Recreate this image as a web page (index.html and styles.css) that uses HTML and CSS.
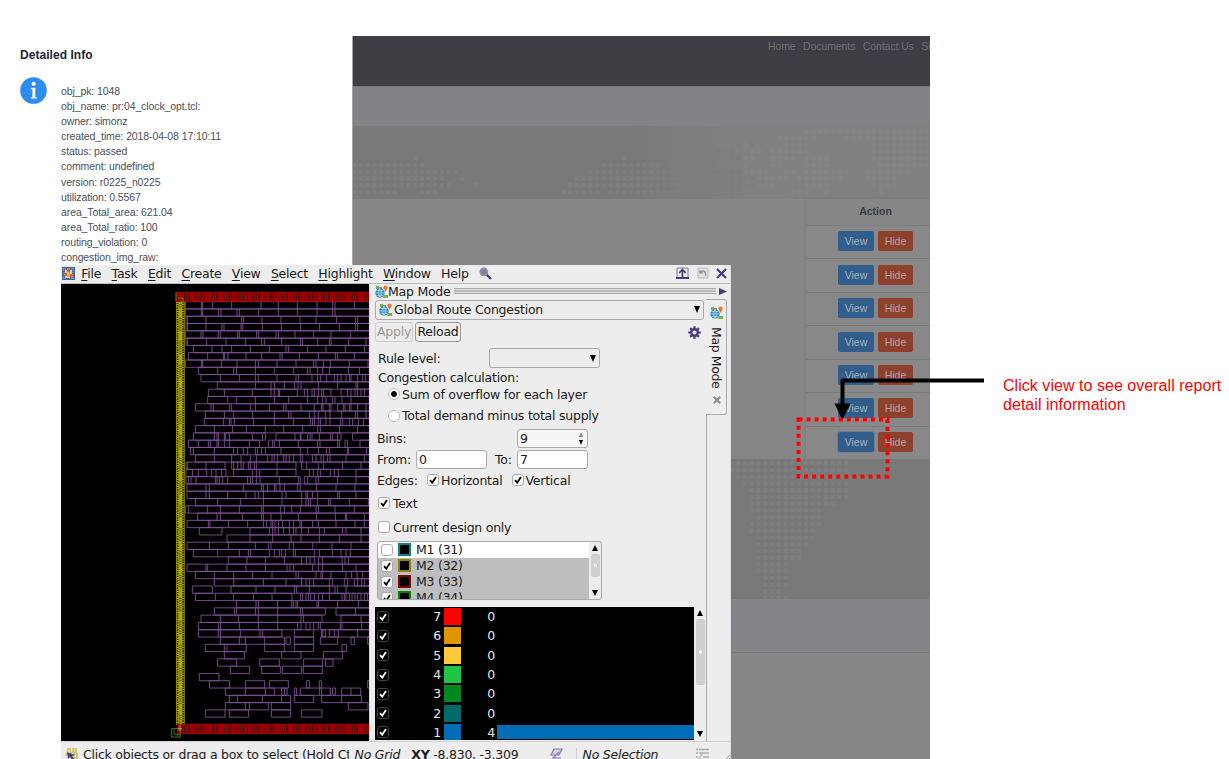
FILE: index.html
```html
<!DOCTYPE html>
<html lang="en">
<head>
<meta charset="utf-8">
<title>Detailed Info</title>
<link rel="stylesheet" href="styles.css">
</head>
<body>
<svg class="defs" width="0" height="0">
  <symbol id="map" viewBox="0 0 13 13">
    <path d="M1 1h3v3H1zM4 2h3v2H4zM9 10h4v3H8z" fill="#79b04c"/>
    <circle cx="5" cy="8" r="4.7" fill="#2c86b8"/>
    <path d="M.5 8h9M1.500 5.500h7M1.500 10.500h7M5 3.400v9.200M5 3.400q-4 4.600 0 9.200M5 3.400q4 4.600 0 9.200" fill="none" stroke="#c8e4ee" stroke-width=".6"/>
    <path d="M10.500 7 8.600 3.500a2.100 2.100 0 1 1 3.800 0z" fill="#ee7535"/>
  </symbol>
  <symbol id="check" viewBox="0 0 8 8"><path d="M1 4.200 3.200 6.700 7 1" fill="none" stroke="currentColor" stroke-width="1.800"/></symbol>
</svg>
<main class="stage">
  <section class="site">
    <nav class="topnav"><span>Home</span><span>Documents</span><span>Contact Us</span><span>Si</span></nav>
    <div class="strip"></div>
    <div class="band band-top"><svg class="dots" id="dots-top" width="578" height="73"></svg></div>
    <div class="content">
      <div class="card">
        <div class="card-head">Action</div>
        <div class="card-row"><b class="btn view">View</b><b class="btn hide">Hide</b></div>
        <div class="card-row"><b class="btn view">View</b><b class="btn hide">Hide</b></div>
        <div class="card-row"><b class="btn view">View</b><b class="btn hide">Hide</b></div>
        <div class="card-row"><b class="btn view">View</b><b class="btn hide">Hide</b></div>
        <div class="card-row"><b class="btn view">View</b><b class="btn hide">Hide</b></div>
        <div class="card-row"><b class="btn view">View</b><b class="btn hide">Hide</b></div>
        <div class="card-row"><b class="btn view focus">View</b><b class="btn hide">Hide</b></div>
      </div>
    </div>
    <div class="band band-bottom"><svg class="dots" id="dots-bottom" width="578" height="140"></svg></div>
    <div class="prefoot"></div>
    <div class="foot"></div>
  </section>

  <section class="info">
    <h1>Detailed Info</h1>
    <div class="info-body">
      <svg width="27" height="27" viewBox="0 0 27 27"><circle cx="13.5" cy="13.5" r="13.3" fill="#2d8cf0"/><circle cx="13.7" cy="6.800" r="2.100" fill="#fff"/><path d="M10.800 10.700h4.500v9.500h1.500v1.400h-6v-1.400h1.600v-8h-1.600z" fill="#fff"/></svg>
      <div class="lines">
        <p>obj_pk: 1048</p><p>obj_name: pr:04_clock_opt.tcl:</p><p>owner: simonz</p><p>created_time: 2018-04-08 17:10:11</p><p>status: passed</p><p>comment: undefined</p><p>version: r0225_n0225</p><p>utilization: 0.5567</p><p>area_Total_area: 621.04</p><p>area_Total_ratio: 100</p><p>routing_violation: 0</p><p>congestion_img_raw:</p>
      </div>
    </div>
  </section>

  <section class="tool">
    <div class="menubar">
      <svg class="app" width="13" height="13" viewBox="0 0 13 13"><path fill="#44659a" d="M0 0h13v13H0z"/><path fill="#d9d0b5" d="M3 3h7v8H3z"/><path fill="#ce6239" d="M5 1h3v4H5zM2 6h3v3H2zM8 7h3v4H8z"/><path d="M1 2h11M1 11h11M2 1v11M11 1v11" stroke="#9cb3cf" stroke-dasharray="1 1"/><path fill="#edae54" d="M5 5h3v5H5z"/></svg>
      <span><u>F</u>ile</span><span><u>T</u>ask</span><span><u>E</u>dit</span><span><u>C</u>reate</span><span><u>V</u>iew</span><span><u>S</u>elect</span><span><u>H</u>ighlight</span><span><u>W</u>indow</span><span>Help</span>
      <svg width="13" height="13" viewBox="0 0 13 13"><path d="m7 7 5 5" stroke="#4b3a80" stroke-width="2.4"/><circle cx="4.8" cy="4.8" r="3.8" fill="#8181a5" stroke="#9a9aa8" stroke-width="1.3"/></svg>
      <div class="wincontrols">
        <svg width="13" height="12" viewBox="0 0 13 12"><path d="M1 1h11v10H1z" fill="none" stroke="#8275a7"/><path d="M6.500 11V3M3.200 6l3.300-3.500L9.800 6M0 11h13" fill="none" stroke="#4b3a80" stroke-width="1.800"/></svg>
        <svg width="12" height="12" viewBox="0 0 12 12"><path d="M1 1h10v10H1z" fill="#e2e2e2" stroke="#bbb"/><path d="M3 3v3h3M3.500 5.500C6 2.500 9 4 8.500 8.500" fill="none" stroke="#858585" stroke-width="1.200"/></svg>
        <svg width="11" height="11" viewBox="0 0 11 11"><path d="m1 1 9 9M10 1 1 10" stroke="#4b3a80" stroke-width="2.200"/></svg>
      </div>
    </div>
    <div class="workspace">
      <svg class="layout" id="layout" width="309" height="457" viewBox="15 0 927 1371"></svg>
      <div class="panel">
        <div class="panel-head"><svg width="13" height="13"><use href="#map"/></svg><span>Map Mode</span><i class="grip"></i><svg width="8" height="9" viewBox="0 0 8 9"><path d="M0 1l8 3.500L0 8z" fill="#4b3a80"/></svg></div>
        <div class="panel-body">
          <div class="form">
            <div class="combo wide"><svg width="13" height="13"><use href="#map"/></svg><span>Global Route Congestion</span><i class="down"></i></div>
            <div class="row buttons"><span class="pbtn off">Apply</span><span class="pbtn">Reload</span><svg class="gear" width="13" height="13" viewBox="-6.500 -6.500 13 13"><circle r="3.300" fill="none" stroke="#4b3a80" stroke-width="2.400"/><path d="M0-6.300v2.500M0 6.300V3.800M-6.300 0h2.500M6.300 0H3.800M-4.400-4.400l1.600 1.600M4.400 4.400 2.800 2.800M-4.400 4.400l1.600-1.600M4.400-4.400 2.800-2.800" stroke="#4b3a80" stroke-width="2.200"/></svg></div>
            <div class="row rule"><span>Rule level:</span><div class="combo small"><i class="down"></i></div></div>
            <div class="row calc">Congestion calculation:</div>
            <div class="row opt"><i class="radio on"></i>Sum of overflow for each layer</div>
            <div class="row opt"><i class="radio"></i>Total demand minus total supply</div>
            <div class="row bins"><span>Bins:</span><div class="field spin">9<span class="arrows"><i class="up"></i><i class="dn"></i></span></div></div>
            <div class="row range"><span class="from">From:</span><div class="field">0</div><span class="to">To:</span><div class="field">7</div></div>
            <div class="row edges"><span class="elabel">Edges:</span><i class="cb"><svg><use href="#check"/></svg></i><span class="hz">Horizontal</span><i class="cb"><svg><use href="#check"/></svg></i><span>Vertical</span></div>
            <div class="row one"><i class="cb"><svg><use href="#check"/></svg></i>Text</div>
            <div class="row one"><i class="cb"></i>Current design only</div>
            <div class="layers">
              <div class="layer-list">
                <div class="layer"><i class="cb"></i><i class="sw m1"></i>M1 (31)</div>
                <div class="layer sel"><i class="cb"><svg><use href="#check"/></svg></i><i class="sw m2"></i>M2 (32)</div>
                <div class="layer sel"><i class="cb"><svg><use href="#check"/></svg></i><i class="sw m3"></i>M3 (33)</div>
                <div class="layer sel"><i class="cb"><svg><use href="#check"/></svg></i><i class="sw m4"></i>M4 (34)</div>
              </div>
              <div class="scroll"><i class="sup"></i><i class="thumb short"></i><i class="sdn"></i></div>
            </div>
            <div class="hist">
              <div class="bars">
                <div class="bar"><i class="cb dark"><svg><use href="#check"/></svg></i><span class="lv">7</span><i class="chip c7"></i><span class="n">0</span></div>
                <div class="bar"><i class="cb dark"><svg><use href="#check"/></svg></i><span class="lv">6</span><i class="chip c6"></i><span class="n">0</span></div>
                <div class="bar"><i class="cb dark"><svg><use href="#check"/></svg></i><span class="lv">5</span><i class="chip c5"></i><span class="n">0</span></div>
                <div class="bar"><i class="cb dark"><svg><use href="#check"/></svg></i><span class="lv">4</span><i class="chip c4"></i><span class="n">0</span></div>
                <div class="bar"><i class="cb dark"><svg><use href="#check"/></svg></i><span class="lv">3</span><i class="chip c3"></i><span class="n">0</span></div>
                <div class="bar"><i class="cb dark"><svg><use href="#check"/></svg></i><span class="lv">2</span><i class="chip c2"></i><span class="n">0</span></div>
                <div class="bar"><i class="cb dark"><svg><use href="#check"/></svg></i><span class="lv">1</span><i class="chip c1"></i><span class="n">4</span><i class="fill"></i></div>
              </div>
              <div class="scroll"><i class="sup"></i><i class="thumb long"></i><i class="sdn"></i></div>
            </div>
          </div>
          <div class="side">
            <div class="tab"><svg width="13" height="13"><use href="#map"/></svg><span class="vert">Map Mode</span><svg width="8" height="8" viewBox="0 0 8 8"><path d="m.8.8 6.400 6.400M7.200.8.8 7.200" stroke="#888" stroke-width="2"/></svg></div>
            <div class="side-rest"></div>
          </div>
        </div>
      </div>
    </div>
    <div class="status">
      <svg class="pick" width="13" height="12" viewBox="0 0 13 12"><path d="M1 8 3 1h2l1 5M8 1h3v3H8zM9 6h3v4H9z" fill="none" stroke="#d6c873" stroke-width="2"/><path d="m2 4 8 3-3 1 3 4H7L5 9l-2 2z" fill="#4b3a80"/></svg>
      <span class="hint">Click objects or drag a box to select (Hold Ct</span>
      <em class="grid">No Grid</em>
      <span class="xy"><b>XY</b> -8.830, -3.309</span>
      <svg class="pen" width="13" height="12" viewBox="0 0 13 12"><path d="M4 1h8L9 7H1zM3 10l6-6M2 10h9" fill="#d8d0e6" stroke="#8877aa" stroke-width="1.200"/></svg>
      <i class="sep"></i>
      <em class="nosel">No Selection</em>
      <svg class="lst" width="13" height="12" viewBox="0 0 13 12"><path d="M0 1.500h2M3 1.500h10M0 5h2M3 5h10M0 9h2M7 9h6M3 11l3-5" stroke="#aaa" stroke-width="1.300"/></svg>
      <svg class="size" width="7" height="7" viewBox="0 0 7 7"><path d="M0 7 7 0M3 7l4-4" stroke="#999"/></svg>
    </div>
  </section>

  <svg class="callout" width="194" height="106" viewBox="0 0 194 106">
    <path d="M188 5.500H46.500V32" fill="none" stroke="#000" stroke-width="4" stroke-linejoin="round"/>
    <path d="M38.500 28.500h16L46.500 45z"/>
    <rect x="2.500" y="44.500" width="89" height="57" fill="none" stroke="#f00" stroke-width="4" stroke-dasharray="4 4.050"/>
  </svg>
  <p class="note">Click view to see overall report<br>detail information</p>
</main>
<script src="chart.js"></script>
</body>
</html>
```
FILE: chart.js
```js
// Standard-cell rows: outlines as x positions, "|" separates detached groups.
const rows = `388 436 440 470 527 615 667 724 783 830 837 895 940
388 436 440 487 495 543 550 608 667 724 783 830 837 940
390 395 450 557 563 618 675 732 780 842 898 905 940
390 395 450 498 504 555 560 619 676 734 791 850 898 905 940
388 435 441 487 493 545 550 602 608 660 667 717 773 825 883 940
390 395 452 510 568 617 625 677 733 740 785 820 825 878 930 940
412 468 498 527 583 640 690 697 755 810 868 926 940
397 455 502 506 516 570 617 672 678 730 787 838 845 895 940
388 436 440 497 543 598 607 663 720 773 780 802 823 880 936 940
427 485 533 542 598 655 713 755 762 785 800 820 877 910 940
435 493 550 598 607 663 720 727 768 785 793 812 835 845 855 870 880 885 905 920 928 940
484 598 645 655 685 716 726 735 787 845 900 905 940
457 505 589 645 655 667 671 724 | 745 755 | 768 775 787 797 803 825 | 855 875 885 897 905 915 925 940
455 515 | 541 598 656 698 755 785 800 810 830 837 858 885 940
418 465 472 520 526 583 598 640 683 690 735 775 797 801 820 825 | 845 862 867 880 885 905 930 940
448 505 533 590 655 698 705 760 775 787 808 822 857 898 905 930 940
445 503 520 525 535 592 655 713 763 770 775 787 793 810 822 853 860 880 890 907 922 940
418 475 530 571 628 683 740 785 793 850 905 940
412 475 483 488 | 505 508 520 590 620 628 | 660 717 733 735 755 762 768 790 823 830 845 855 | 890 940
397 427 457 463 483 488 505 520 580 610 | 637 650 655 670 727 785 792 845 850 | 867 875 | 912 940
403 412 475 533 545 | 562 575 | 598 605 617 628 675 733 755 787 812 820 875 878 932 940
418 475 527 555 583 601 635 648 655 665 683 690 700 713 733 740 | 770 780 795 803 815 822 870 925 940
390 395 450 507 | 527 533 545 555 562 | 577 583 595 601 663 720 | 737 752 787 803 860 915 940
390 410 427 452 | 467 480 497 510 | 533 590 601 610 663 720 | 760 772 785 793 823 | 835 847 | 900 940
390 397 405 420 478 483 490 500 515 575 583 590 601 612 670 727 733 | 745 755 780 787 845 900 940
393 450 460 562 617 622 635 655 660 672 685 725 733 782 840 897 940
393 450 460 515 570 597 608 622 678 690 737 750 755 770 785 845 850 900 940
418 485 553 622 678 737 750 757 763 785 818 823 880 937
388 397 455 493 550 617 622 673 685 707 733 780 787 837 895 940
425 483 493 560 617 622 645 675 727 782 838 868 872 925 940
393 457 462 517 575 622 632 645 650 657 667 680 700 713 732 737 770 787 840 897 925 940
430 498 | 582 640 650 657 667 683 700 713 720 737 757 790 805 860 870 915 940
513 582 650 705 735 790 850 915 940
393 460 517 598 637 645 700 712 770 828 885 940
412 485 550 577 583 640 | 655 670 | 677 688 | 712 718 775 790 830 855 870 883 940
517 573 628 685 737 752 762 775 | 787 800 858 867 877 940
393 450 455 513 570 628 693 702 712 770 787 800 860 900 940
418 475 533 590 648 720 727 780 795 800 825 870 887 903 920 940
475 533 622 690 737 750 760 773 820 830 | 865 875 | 895 905 917 925 940
409 469 | 525 600 657 715 722 760 820 837 845 870 940
418 478 533 592 648 708 | 733 740 | 750 757 | 763 775 | 787 800 820 858 865 | 870 880 | 888 897 | 905 915 | 925 935
541 600 607 665 707 712 720 725 783 787 845 907 940
475 535 541 598 607 665 733 740 808 | 840 898 940
435 493 548 607 665 735 743 798 | 855 915 940
427 487 493 550 607 665 725 735 | 750 762 | 773 787 | 793 853 858 917 940
427 487 493 553 612 620 678 | 715 773 | 797 800 808 | 820 835 847 905 940
493 550 568 626 685 | 690 703 | 715 773 | 793 845 | 885 895 | 935 940
448 505 513 571 | 626 685 | 715 773 | 858 871
505 565 | 677 735 | 802 860
484 542 | 611 670 | 743 800 | 808 831
523 581 | 617 673 | 679 737 | 742 800
430 489
460 521 | 568 626 | 640 697 | 751 760 | 790 797 | 935 940
508 568 628 655 | 677 685 693 | 715 722 | 733 790 797 823 | 829 838 | 857 885 914
520 544 619 677 704 | 715 773 | 797 857 916
508 568 580 637 | 646 704 | 877 936
448 507 | 520 578 | 646 704 | 736 798`.split('\n');
const H = 21.87, TOP = 53;
let d = '';
rows.forEach((r, i) => {
  const y = (TOP + i * H).toFixed(1);
  r.split('|').forEach(g => {
    const xs = g.trim().split(' ').map(Number);
    d += `M${xs[0]} ${y}H${xs[xs.length - 1]}v${H}H${xs[0]}z`;
    xs.slice(1, -1).forEach(x => { d += `M${x} ${y}v${H}`; });
  });
});
let pads = '';
for (let y = 56; y < 1318; y += 7) pads += `M362 ${y}h5v4h-5zM379 ${y}h5v4h-5z`;
let mid = '';
for (let y = 60, k = 0; y < 1315; y += k % 3 ? 14 : 42, k++) mid += `M369 ${y}h8v3h-8zM369 ${y + 7}h8v3h-8z`;
let ties = '';
for (let x = 368, k = 0; x < 940; x += [6, 8, 7, 5, 9][k % 5], k++) ties += `M${x} 26v25M${x} 1322v25`;
document.getElementById('layout').innerHTML = `
  <rect x="15" width="924" height="1371" fill="#000"/>
  <path d="${d}" fill="none" stroke="#84539c" stroke-width="2.600"/>
  <rect x="360" y="52" width="26" height="1270" fill="#aaa500"/>
  <path d="${pads}" fill="#171600"/><path d="${mid}" fill="#5d5a00"/>
  <path d="M362 25h577v27H362zM364 1321h575v27H364z" fill="#500000" stroke="#b80000" stroke-width="3"/>
  <path d="M362 34h577M362 43h577M364 1330h575M364 1339h575" stroke="#900000" stroke-width="2"/>
  <path d="${ties}" stroke="#b80000" stroke-width="3"/>
  <path d="M360 24v28M366 42h15v18" fill="none" stroke="#777a00" stroke-width="3"/>
  <path d="M346 1334h27v25h-27zM354 1334v17h19" fill="none" stroke="#327d0b" stroke-width="3"/>
  <path d="M372 1322v20M366 1334h12" stroke="#c0a900" stroke-width="3"/>
  <path d="M736 879v28" stroke="#0878bd" stroke-width="3"/>
  <path d="M940.500 0v1371" stroke="#d8d8d8" stroke-width="3"/>`;

// World-map dot bands: [row, firstCol, lastCol] on a 6.75px grid.
function dots(id, x0, y0, spans, color) {
  const P = 6.75;
  document.getElementById(id).innerHTML += `<path fill="${color}" d="${spans.map(([r, a, b]) => {
    let s = '';
    for (let c = a; c <= b; c++) s += `M${(x0 + c * P).toFixed(2)} ${(y0 + r * P).toFixed(2)}h4.500v4.500h-4.500z`;
    return s;
  }).join('')}"/>`;
}
dots('dots-top', -1, 3, [[4,9,9],[5,0,10],[6,0,15],[7,0,13],[7,16,16],[8,0,14],[8,18,18],[9,0,6],[9,10,12],
  [2,57,59],[3,54,56],[4,54,58],[4,40,40],[5,37,45],[5,47,53],[6,35,59],[7,33,59],[8,32,59],[9,31,36],[9,38,57]], '#7d7e7d');
dots('dots-top', -1, 3, [[0,67,85],[1,63,68],[1,73,85],[2,58,58],[2,64,67],[2,77,85],[3,59,60],[3,62,67],[3,77,85],[4,58,59],[4,62,65],[4,67,70],[4,77,85],
  [5,58,58],[5,62,63],[5,67,70],[5,78,85],[6,58,61],[6,64,65],[6,67,72],[6,76,82],[7,60,64],[7,66,72],[7,76,80],[8,60,62],[8,67,70],[8,77,80],[9,65,67],[9,70,70],[9,78,78]], '#838383');
dots('dots-bottom', 383, 2, [[0,-1,16],[1,-1,16],[2,0,16],[3,1,16],[4,2,16],[5,2,16],[6,2,14],[7,2,12],[8,3,12],[9,2,12],[10,2,11],[11,3,11],[12,3,10],[13,3,9],[14,3,9],[15,3,7],[16,3,7],[17,4,7],[18,4,7],[19,4,6],[20,4,7]], '#7d7e7e');
```
FILE: styles.css
```css
* { box-sizing: border-box; }
body { margin: 0; background: #fff; font-family: "Liberation Sans", Arial, sans-serif; }
p, h1 { margin: 0; }
i { display: block; flex: none; }
svg { flex: none; }
.defs { position: absolute; }
.stage { position: relative; width: 1229px; height: 759px; overflow: hidden; padding: 36px 0 0 352px; }

.site { width: 578px; height: 723px; overflow: hidden; display: flex; flex-direction: column; background: #868686; border-left: 1px solid #a5a5a5; }
.topnav { height: 50px; flex: none; background: #3e3f44; color: #6d6f72; font-size: 10.5px; letter-spacing: -.1px; line-height: 20px; padding-left: 415px; display: flex; gap: 7.500px; white-space: nowrap; }
.strip { height: 40px; flex: none; background: #828386; border-top: 1px solid #75767b; }
.band { flex: none; overflow: hidden; background: #797979; }
.band-top { height: 73px; background: linear-gradient(90deg, #797979 48%, #808080 65%, #808080); }
.band-bottom { height: 140px; }
.dots { display: block; }
.content { height: 260px; flex: none; display: flex; padding-left: 453px; }
.card { width: 139px; flex: none; background: #888; box-shadow: 0 0 3px #747474; }
.card-head { height: 26px; font-size: 10.5px; font-weight: bold; color: #3b3d45; line-height: 24px; text-align: center; background: #868686; }
.card-row { height: 33.43px; border-top: 1px solid #7b7b7d; display: flex; gap: 4px; padding: 5.300px 0 0 32px; }
.btn { height: 20px; border-radius: 2px; font-size: 10.5px; line-height: 20px; font-weight: normal; text-align: center; color: #a9afb5; }
.view { width: 36px; background: #315d8d; }
.hide { width: 35px; background: #8d402c; color: #b5a5a0; }
.focus { box-shadow: 0 0 0 1px #6f7f90; }
.prefoot { height: 54px; flex: none; background: #828487; border-bottom: 1px solid #74777b; }
.foot { flex: 1; background: #868686; }

.info { position: absolute; left: 0; top: 36px; width: 352px; height: 229px; background: #fff; padding: 11px 0 0 20px; }
.info h1 { font-size: 12px; line-height: 16px; letter-spacing: .05px; color: #1c2438; }
.info-body { display: flex; gap: 14px; padding-top: 14px; }
.lines { padding-top: 7px; font-size: 10.5px; letter-spacing: -.1px; line-height: 15.100px; color: #495060; white-space: nowrap; }

.tool { position: absolute; left: 61px; top: 265px; width: 670px; height: 494px; overflow: hidden; background: #ededed; font-family: "DejaVu Sans", sans-serif; font-size: 12.500px; letter-spacing: -.24px; color: #1a1a1a; white-space: nowrap; border-right: 1px solid #dcdcdc; }
.menubar { height: 19px; display: flex; align-items: center; gap: 10.300px; padding: 0 3px 2px 1px; border-bottom: 1px solid #bbb; }
.menubar .app { margin-right: -4px; }
.menubar u { text-underline-offset: 2px; }
.wincontrols { margin-left: auto; display: flex; align-items: center; gap: 7.500px; }
.workspace { height: 458px; display: flex; border-bottom: 1px solid #d2d2d2; }
.layout { display: block; }
.panel { width: 361px; padding-left: 5px; }
.panel-head { height: 15px; padding-bottom: 1px; display: flex; align-items: center; }
.grip { width: 262px; height: 6px; margin: 0 3px 0 auto; border: solid #aaa; border-width: 1px 0; background: linear-gradient(#ddd 1px, #bbb 1px, #bbb 3px, #ddd 3px); }
.panel-head svg:last-child { margin-right: 3px; }
.panel-body { display: flex; }
.form { width: 331px; display: grid; grid-template-rows: 21px 24px 28px 11px 22px 21px 25px 18px 22px 24px 24px 68px 133px; align-items: center; }
.row { display: flex; align-items: center; }
.combo { height: 20px; border: 1px solid #aaa; border-radius: 3px; display: flex; align-items: center; gap: 2px; padding: 0 3px; }
.wide { width: 329px; }
.small { width: 111px; }
.down { margin-left: auto; border: solid transparent; border-width: 7px 3.500px 0; border-top-color: #000; }
.buttons { gap: 2px; }
.pbtn { height: 20px; line-height: 18px; border: 1px solid #999; border-radius: 3px; padding: 0; width: 46px; text-align: center; }
.off { color: #999; border-color: #ccc; width: 38px; }
.gear { margin-left: 225px; }
.rule { padding-left: 3px; }
.rule span { width: 111px; }
.calc { padding-left: 3px; }
.opt { padding-left: 13px; gap: 2px; }
.radio { width: 12px; height: 12px; border-radius: 50%; border: 1px solid #bbb; background: #fff; }
.on { background: radial-gradient(circle, #000 2.500px, #fff 3.300px); }
.bins, .range, .edges { padding-left: 2px; }
.bins > span { width: 140px; }
.range { padding-bottom: 2px; }
.field { width: 71px; height: 19px; border: 1px solid #aaa; border-radius: 3px; background: #fff; line-height: 17px; padding-left: 2px; }
.spin { background: #f5f5f5; display: flex; justify-content: space-between; padding-right: 4px; }
.arrows { display: flex; flex-direction: column; justify-content: center; gap: 3px; }
.up { border: solid transparent; border-width: 0 2.500px 5px; border-bottom-color: #888; }
.dn { border: solid transparent; border-width: 5px 2.500px 0; border-top-color: #000; }
.from { width: 39px; }
.to { width: 30px; padding-left: 8px; }
.elabel { width: 50px; }
.hz { width: 70.500px; }
.edges .cb { margin-right: 2px; }
.one { padding-left: 3px; gap: 3px; }
.cb { width: 12px; height: 12px; border: 1px solid #aaa; border-radius: 3px; background: #fff; display: flex; align-items: center; justify-content: center; color: #000; }
.cb svg { width: 8px; height: 8px; }
.layers { align-self: start; margin: 2px 0 0 2px; width: 225px; height: 59px; border: 1px solid #aaa; border-radius: 3px; display: flex; overflow: hidden; }
.layer-list { width: 211px; background: #bebebe; }
.layer { height: 16px; display: flex; align-items: center; padding: 0 0 1px 3px; }
.layer:first-child { background: #fff; }
.layer .cb { margin-right: 5px; }
.sw { width: 13px; height: 13px; background: #000; border: 2px solid; margin-right: 5px; }
.m1 { border-color: #078484; }
.m2 { border-color: #858500; }
.m3 { border-color: #850000; }
.m4 { border-color: #008500; }
.scroll { width: 12px; display: flex; flex-direction: column; align-items: center; padding: 3px 0; }
.sup { border: solid transparent; border-width: 0 3px 6px; border-bottom-color: #000; }
.sdn { border: solid transparent; border-width: 6px 3px 0; border-top-color: #000; margin-top: auto; }
.thumb { width: 9px; background: radial-gradient(circle, #f5f5f5 1.500px, #cfcfcf 2px); border-radius: 2px; margin-top: 3px; }
.short { height: 23px; }
.long { height: 66px; }
.hist { height: 133px; display: flex; }
.bars { width: 319px; background: #000; overflow: hidden; }
.bar { height: 19.300px; display: flex; align-items: center; color: #e8e8e8; padding-left: 2px; }
.dark { background: #000; border-color: #444; color: #fff; }
.lv { width: 52px; text-align: right; }
.chip { width: 17px; height: 17px; margin-left: 3px; }
.c7 { background: #f00; } .c6 { background: #dd9500; } .c5 { background: #ffc938; } .c4 { background: #20c548; } .c3 { background: #008720; } .c2 { background: #006b6b; } .c1 { background: #006db5; }
.n { width: 34px; text-align: right; }
.fill { flex: 1; height: 14px; margin-left: 2px; background: #006db5; }
.side { width: 21px; height: 442px; display: flex; flex-direction: column; }
.tab { height: 116px; border: solid #aaa; border-width: 1px 1px 1px 0; border-radius: 0 3px 3px 0; display: flex; flex-direction: column; align-items: center; padding: 6px 0 0 1px; gap: 8px; }
.vert { writing-mode: vertical-rl; letter-spacing: -.4px; }
.side-rest { flex: 1; border-left: 1px solid #aaa; }
.status { height: 24px; display: flex; align-items: center; padding-left: 4px; }
.hint { width: 267px; overflow: hidden; margin: 0 6px 0 5px; }
.grid { width: 57px; }
.xy { width: 139px; }
.sep { width: 1px; height: 12px; background: #ccc; margin: 0 6px 0 13px; }
.nosel { width: 114px; }
.size { margin: 8px 0 0 14px; }

.callout { position: absolute; left: 795.500px; top: 374.500px; }
.note { position: absolute; left: 1003px; top: 376px; font-size: 16px; letter-spacing: .04px; line-height: 19px; color: #f00; white-space: nowrap; }
```
